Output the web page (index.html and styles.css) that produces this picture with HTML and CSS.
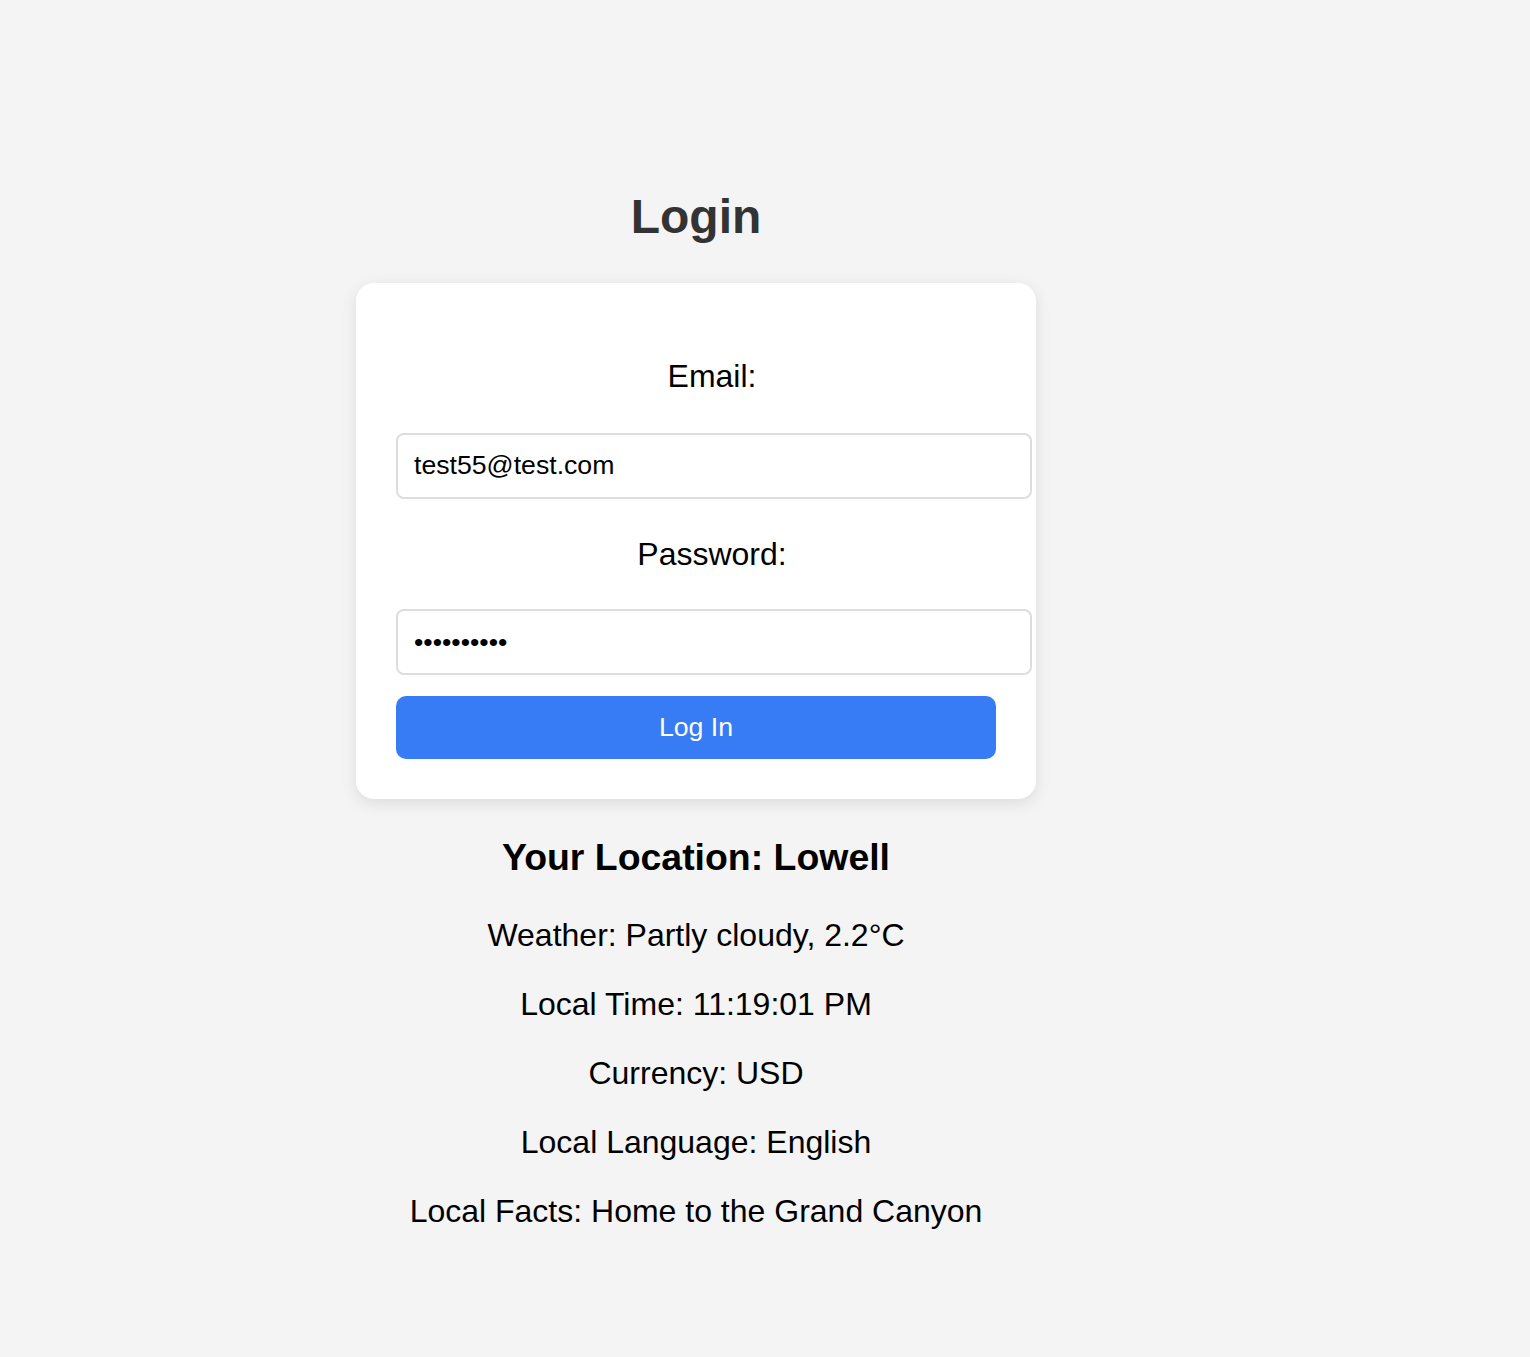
FILE: index.html
```html
<!DOCTYPE html>
<html lang="en">
<head>
<meta charset="utf-8">
<title>Login</title>
<link rel="stylesheet" href="styles.css">
</head>
<body>
<main class="page">
  <h1 class="title">Login</h1>
  <form class="card">
    <label class="field-label label-first" for="email">Email:</label>
    <input class="field-input" id="email" type="email" value="test55@test.com">
    <label class="field-label" for="password">Password:</label>
    <input class="field-input" id="password" type="password" value="abcdefghij">
    <button class="login-btn" type="button">Log In</button>
  </form>
  <section class="location">
    <h3 class="location-title">Your Location: Lowell</h3>
    <p class="info">Weather: Partly cloudy, 2.2°C</p>
    <p class="info">Local Time: 11:19:01 PM</p>
    <p class="info">Currency: USD</p>
    <p class="info">Local Language: English</p>
    <p class="info">Local Facts: Home to the Grand Canyon</p>
  </section>
</main>
</body>
</html>
```
FILE: styles.css
```css
html, body {
  margin: 0;
  padding: 0;
  background: #f4f4f4;
}

body {
  font-family: "Liberation Sans", Arial, Helvetica, sans-serif;
  font-size: 32px;
  color: #000;
}

.page {
  width: 1392px;
  display: flex;
  flex-direction: column;
  align-items: center;
}

.title {
  margin: 189px 0 39px;
  font-size: 48px;
  font-weight: 700;
  line-height: normal;
  color: #333;
}

.card {
  width: 600px;
  padding: 40px;
  background: #fff;
  border-radius: 18px;
  box-shadow: 0 4px 16px rgba(0, 0, 0, 0.1);
  display: flex;
  flex-direction: column;
  align-items: flex-start;
}

.field-label {
  display: block;
  width: 632px;
  text-align: center;
  line-height: normal;
  margin: 37.5px 0 36px;
}

.label-first {
  margin-top: 35px;
  margin-bottom: 37.5px;
}

.field-input {
  box-sizing: content-box;
  width: 600px;
  margin: 0;
  padding: 15.5px 16px;
  border: 2px solid #ddd;
  border-radius: 8px;
  font-family: "Liberation Sans", Arial, sans-serif;
  font-size: 26.67px;
  line-height: normal;
  color: #000;
  background: #fff;
  outline: none;
}

.login-btn {
  box-sizing: border-box;
  width: 600px;
  margin: 21px 0 0;
  padding: 16px;
  border: none;
  border-radius: 10px;
  background: #377bf5;
  color: #fff;
  font-family: "Liberation Sans", Arial, sans-serif;
  font-size: 26.67px;
  line-height: normal;
}

.location {
  text-align: center;
}

.location-title {
  margin: 37.44px 0;
  font-size: 37.44px;
  font-weight: 700;
  line-height: normal;
}

.info {
  margin: 32px 0;
  line-height: normal;
}
```
